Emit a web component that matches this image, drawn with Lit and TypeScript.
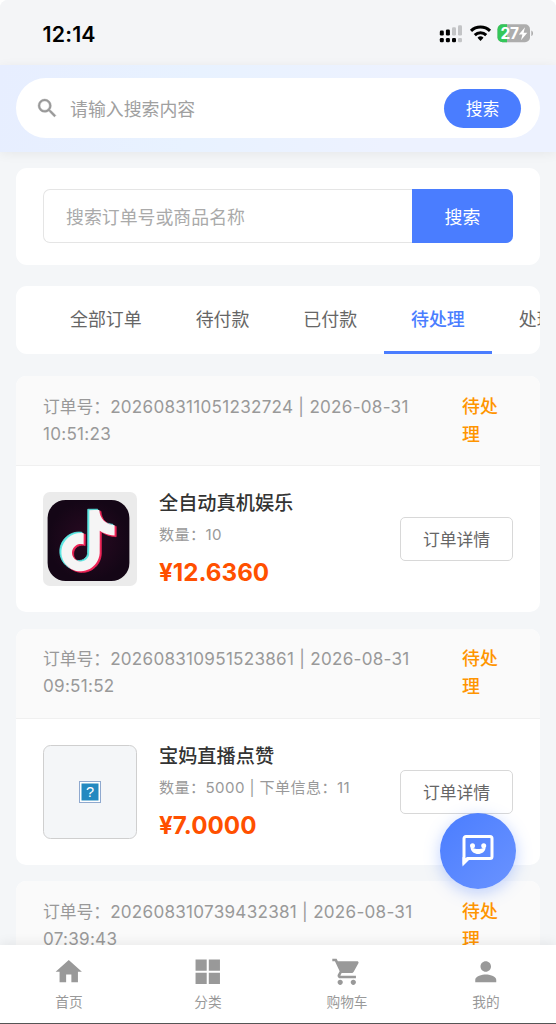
import { LitElement, html, css, svg } from "lit";
import { customElement, property } from "lit/decorators.js";

const NOTE_PATH =
  "M12.525.02c1.31-.02 2.61-.01 3.91-.02.08 1.53.63 3.09 1.75 4.17 1.12 1.11 2.7 1.62 4.24 1.79v4.03c-1.44-.05-2.89-.35-4.2-.97-.57-.26-1.1-.59-1.62-.93-.01 2.92.01 5.84-.02 8.75-.08 1.4-.54 2.79-1.35 3.94-1.31 1.92-3.58 3.17-5.91 3.21-1.43.08-2.86-.31-4.08-1.03-2.02-1.19-3.44-3.37-3.65-5.71-.02-.5-.03-1-.01-1.49.18-1.9 1.12-3.72 2.58-4.96 1.66-1.44 3.98-2.13 6.15-1.72.02 1.48-.04 2.96-.04 4.44-.99-.32-2.15-.23-3.02.37-.63.41-1.11 1.04-1.36 1.75-.21.51-.15 1.07-.14 1.61.24 1.64 1.82 3.02 3.5 2.87 1.12-.01 2.19-.66 2.77-1.61.19-.33.4-.67.41-1.06.1-1.79.06-3.57.07-5.36.01-4.03-.01-8.05.02-12.07z";

interface Order {
  no: string;
  date: string;
  time: string;
  name: string;
  meta: string;
  price: string;
  cover: "note" | "missing";
}

const ORDERS: Order[] = [
  { no: "202608311051232724", date: "2026-08-31", time: "10:51:23", name: "全自动真机娱乐", meta: "数量：10", price: "¥12.6360", cover: "note" },
  { no: "202608310951523861", date: "2026-08-31", time: "09:51:52", name: "宝妈直播点赞", meta: "数量：5000 | 下单信息：11", price: "¥7.0000", cover: "missing" },
  { no: "202608310739432381", date: "2026-08-31", time: "07:39:43", name: "", meta: "", price: "", cover: "missing" },
];

const TABS = ["全部订单", "待付款", "已付款", "待处理", "处理中"];

const NAV = [
  { label: "首页", icon: svg`<path d="M10 20v-6h4v6h5v-8h3L12 3 2 12h3v8z"/>` },
  { label: "分类", icon: svg`<path d="M2.700 2.700h8.500v8.500H2.700zM12.800 2.700h8.500v8.500h-8.500zM2.700 12.800h8.500v8.500H2.700zM12.800 12.800h8.500v8.500h-8.500z"/>` },
  { label: "购物车", icon: svg`<path d="M7 18c-1.1 0-1.99.9-1.99 2S5.900 22 7 22s2-.9 2-2-.9-2-2-2zM1 2v2h2l3.600 7.590-1.350 2.450c-.16.280-.25.610-.25.960 0 1.100.9 2 2 2h12v-2H7.420c-.14 0-.25-.11-.25-.25l.03-.12.9-1.630h7.450c.75 0 1.410-.41 1.750-1.030l3.580-6.490c.08-.14.12-.31.12-.48 0-.55-.45-1-1-1H5.210l-.94-2H1zm16 16c-1.100 0-1.990.9-1.990 2s.89 2 1.990 2 2-.9 2-2-.9-2-2-2z"/>` },
  { label: "我的", icon: svg`<path d="M12 12c2.210 0 4-1.790 4-4s-1.790-4-4-4-4 1.790-4 4 1.790 4 4 4zm0 2c-2.670 0-8 1.340-8 4v2h16v-2c0-2.660-5.330-4-8-4z"/>` },
];

@customElement("order-card")
class OrderCard extends LitElement {
  @property({ attribute: false }) order!: Order;

  static styles = css`
    :host { display: block; flex: none; background: #fff; border-radius: 10px; overflow: hidden; }
    .head { display: flex; align-items: center; justify-content: space-between; box-sizing: border-box;
      height: 90px; padding: 0 27px; background: #fafafa; border-bottom: 1px solid #f0f0f0; }
    .info { width: 390px; font-size: 16.8px; line-height: 25.6px; color: #999; }
    .digits { font-size: 17.1px; letter-spacing: 0.26px; }
    .status { width: 51px; font-size: 17.9px; line-height: 28px; font-weight: 500; color: #ff9500; }
    .body { display: flex; align-items: center; height: 146px; padding: 0 27px; }
    .cover { flex: none; width: 94px; height: 94px; }
    .text { flex: 1; margin-left: 22px; display: flex; flex-direction: column; white-space: nowrap; }
    .name { font-size: 19.2px; font-weight: 500; line-height: 28px; color: #333; }
    .meta { font-size: 15.1px; letter-spacing: 0.4px; line-height: 22px; margin-top: 7px; color: #999; }
    .price { font-size: 24.2px; line-height: 32px; margin-top: 11px; font-weight: 700; color: #ff5000; }
    .detail { box-sizing: border-box; width: 113px; height: 44px; border: 1.4px solid #d8d8d8; border-radius: 5px;
      display: flex; align-items: center; justify-content: center; font-size: 16.8px; color: #666; background: #fff; }
  `;

  renderCover() {
    if (this.order.cover === "note") {
      return html`<svg class="cover" viewBox="0 0 94 94">
        <defs>
          <radialGradient id="g"><stop offset="0" stop-color="#2a0a22" /><stop offset="1" stop-color="#140616" /></radialGradient>
        </defs>
        <rect width="94" height="94" rx="7" fill="#ebebeb" />
        <rect x="4.600" y="8" width="81.800" height="81" rx="18" fill="url(#g)" />
        <path transform="translate(12.800 17.200) scale(2.55)" fill="#5fe8e4" stroke="#5fe8e4" stroke-width=".3" d=${NOTE_PATH} />
        <path transform="translate(16 19.200) scale(2.55)" fill="#ee2557" stroke="#ee2557" stroke-width=".3" d=${NOTE_PATH} />
        <path transform="translate(14.400 18.100) scale(2.55)" fill="#f5f5f5" d=${NOTE_PATH} />
      </svg>`;
    }
    return html`<svg class="cover" viewBox="0 0 94 94">
      <rect x=".5" y=".5" width="93" height="93" rx="7" fill="#f4f6f8" stroke="#cfcfcf" />
      <rect x="36.500" y="36.500" width="21" height="21" fill="#fff" stroke="#8fa9cf" />
      <rect x="38.500" y="38.500" width="17" height="17" fill="#2389c0" />
      <text x="47" y="52.300" text-anchor="middle" font-family="Liberation Sans, sans-serif" font-size="14.500" fill="#fff">?</text>
    </svg>`;
  }

  render() {
    const o = this.order;
    return html`
      <div class="head">
        <div class="info">订单号：<span class="digits">${o.no} | ${o.date}<br />${o.time}</span></div>
        <div class="status">待处理</div>
      </div>
      <div class="body">
        ${this.renderCover()}
        <div class="text">
          <div class="name">${o.name}</div>
          <div class="meta">${o.meta}</div>
          <div class="price">${o.price}</div>
        </div>
        <div class="detail">订单详情</div>
      </div>
    `;
  }
}

@customElement("app-root")
class AppRoot extends LitElement {
  static styles = css`
    :host { display: flex; flex-direction: column; position: relative; height: 1024px; overflow: hidden; background: #f4f6f8;
      font-family: Inter, "Noto Sans CJK SC", sans-serif; border-radius: 8px 8px 0 0; }
    .statusbar { flex: none; display: flex; align-items: center; justify-content: space-between; height: 65px;
      box-sizing: border-box; padding: 2px 22px 0 42.5px; background: #f4f5f7; }
    .clock { font-size: 21.3px; letter-spacing: 0.2px; font-weight: 600; color: #000; }
    .top { flex: none; height: 87px; box-sizing: border-box; display: flex; align-items: center; padding: 0 16px 1px;
      background: linear-gradient(100deg, #e7eeff 0%, #e8f2ff 35%, #edf2ff 70%, #edf2ff 100%); box-shadow: 0 2px 11px rgba(0, 0, 0, 0.06); }
    .pill { flex: 1; height: 60px; border-radius: 30px; background: #fff; display: flex; align-items: center;
      box-sizing: border-box; padding: 0 19px 0 18.500px; }
    .pill svg { width: 24.5px; height: 24.5px; fill: #999; stroke: #999; stroke-width: 0.4; }
    .hint { flex: 1; margin-left: 11px; font-size: 17.9px; color: #a0a0a0; }
    .go { width: 77px; height: 39px; border-radius: 20px; background: #4a7dff; color: #fff; font-size: 16.8px;
      display: flex; align-items: center; justify-content: center; }
    .content { flex: 1; min-height: 0; overflow: hidden; padding: 16px 16px 0; display: flex; flex-direction: column; }
    .find { flex: none; height: 97px; box-sizing: border-box; padding: 21px 27px 22px; background: #fff; border-radius: 11px; display: flex; }
    .field { flex: 1; box-sizing: border-box; border: 1.4px solid #e5e5e5; border-right: 0; border-radius: 7px 0 0 7px;
      display: flex; align-items: center; padding-left: 22px; font-size: 17.9px; color: #aaa; }
    .find-btn { width: 101px; border-radius: 0 7px 7px 0; background: #4a7dff; color: #fff; font-size: 17.9px;
      display: flex; align-items: center; justify-content: center; }
    .tabs { flex: none; margin: 21px 0 22px; height: 68px; padding-left: 27px; background: #fff; border-radius: 11px;
      display: flex; overflow: hidden; white-space: nowrap; }
    .tab { flex: none; box-sizing: border-box; padding: 0 27px; height: 68px; line-height: 67px; font-size: 17.92px; color: #666; }
    .tab.on { color: #4a7dff; font-weight: 500; border-bottom: 3px solid #4a7dff; }
    .list { display: flex; flex-direction: column; gap: 16.5px; }
    .nav { flex: none; z-index: 1; display: flex; height: 79px; box-sizing: border-box; background: #fff; border-bottom: 1px solid #555;
      box-shadow: 0 -2px 11px rgba(0, 0, 0, 0.07); }
    .item { flex: 1; box-sizing: border-box; padding: 11px 1px 0 0; display: flex; flex-direction: column; align-items: center; font-size: 13.7px; line-height: 20px; color: #999; }
    .item svg { width: 31.5px; height: 31.5px; fill: #999; margin-bottom: 4px; }
    .fab { position: absolute; z-index: 2; right: 40px; top: 813px; width: 76px; height: 76px; border-radius: 50%; box-sizing: border-box; padding-bottom: 2px;
      display: flex; align-items: center; justify-content: center; background: linear-gradient(135deg, #4a7dff, #6a93ff);
      box-shadow: 0 4px 16px rgba(74, 125, 255, 0.35); }
  `;

  render() {
    return html`
      <div class="statusbar">
        <div class="clock">12:14</div>
        <svg width="96" height="24" viewBox="0 0 96 24">
          <g fill="#000">
            <rect x="1.800" y="8.600" width="4" height="5" rx="1.300" /><rect x="7.900" y="7.400" width="4" height="6.200" rx="1.300" />
            <rect x="1.800" y="16" width="4" height="4.300" rx="1.300" /><rect x="7.900" y="16" width="4" height="4.300" rx="1.300" />
            <rect x="14" y="16" width="4" height="4.300" rx="1.300" />
          </g>
          <g fill="#c3c4c6">
            <rect x="14" y="5.300" width="4" height="8.300" rx="1.300" /><rect x="20" y="3.200" width="4" height="10.400" rx="1.300" />
            <rect x="20" y="16" width="4" height="4.300" rx="1.300" />
          </g>
          <g fill="none" stroke="#000" stroke-width="3">
            <path d="M33 8.900a13.800 13.800 0 0 1 19 0" /><path d="M36.800 13.100a8.200 8.200 0 0 1 11.400 0" />
          </g>
          <path d="M42.500 18.900l-3-3.100a4.300 4.300 0 0 1 6 0z" />
          <clipPath id="b"><rect x="59.500" y="2.300" width="32.500" height="18" rx="5" /></clipPath>
          <g clip-path="url(#b)"><rect x="59" y="2" width="34" height="19" fill="#adadad" /><rect x="59" y="2" width="10" height="19" fill="#34c759" /></g>
          <path d="M93.300 8.500v5.600c2.300-.8 2.300-4.800 0-5.600z" fill="#adadad" />
          <text x="62.500" y="17" font-family="Inter, sans-serif" font-size="15.500" font-weight="700" fill="#fff" textLength="18.500">27</text>
          <path d="M87 5.200l-6.200 7.200h3.600l-1.400 5.800 6.300-7.500h-3.700z" fill="#fff" />
        </svg>
      </div>
      <div class="top">
        <div class="pill">
          <svg viewBox="0 0 24 24"><path d="M15.500 14h-.79l-.28-.27A6.471 6.471 0 0 0 16 9.500 6.500 6.500 0 1 0 9.500 16c1.610 0 3.090-.59 4.230-1.570l.27.280v.79l5 4.990L20.490 19l-4.990-5zm-6 0C7.010 14 5 11.990 5 9.500S7.010 5 9.500 5 14 7.010 14 9.500 11.990 14 9.500 14z" /></svg>
          <div class="hint">请输入搜索内容</div>
          <div class="go">搜索</div>
        </div>
      </div>
      <div class="content">
        <div class="find">
          <div class="field">搜索订单号或商品名称</div>
          <div class="find-btn">搜索</div>
        </div>
        <div class="tabs">${TABS.map((t, i) => html`<div class="tab ${i === 3 ? "on" : ""}">${t}</div>`)}</div>
        <div class="list">${ORDERS.map((o) => html`<order-card .order=${o}></order-card>`)}</div>
      </div>
      <div class="nav">
        ${NAV.map((n) => html`<div class="item"><svg viewBox="0 0 24 24">${n.icon}</svg>${n.label}</div>`)}
      </div>
      <div class="fab">
        <svg width="34" height="34" viewBox="0 0 34 34" fill="none">
          <path d="M3 28.500V5.500a2 2 0 0 1 2-2h24a2 2 0 0 1 2 2v18a2 2 0 0 1-2 2H6.500z" stroke="#fff" stroke-width="3" />
          <path d="M1.500 24v9.600L8 27z" fill="#fff" />
          <circle cx="11.500" cy="12.700" r="2.500" fill="#fff" /><circle cx="22.700" cy="12.700" r="2.500" fill="#fff" />
          <path d="M9.600 14.800c.8 8.300 14.200 8.300 15 0l-3 .4c-1 1-8 1-9 0z" fill="#fff" />
        </svg>
      </div>
    `;
  }
}
